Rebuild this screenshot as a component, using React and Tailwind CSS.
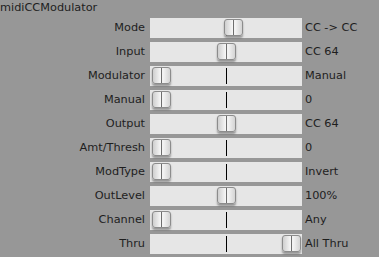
const rows = [
  { label: 'Mode', value: 'CC -> CC', pos: 74 },
  { label: 'Input', value: 'CC 64', pos: 67 },
  { label: 'Modulator', value: 'Manual', pos: 2 },
  { label: 'Manual', value: '0', pos: 2 },
  { label: 'Output', value: 'CC 64', pos: 67 },
  { label: 'Amt/Thresh', value: '0', pos: 2 },
  { label: 'ModType', value: 'Invert', pos: 2 },
  { label: 'OutLevel', value: '100%', pos: 67 },
  { label: 'Channel', value: 'Any', pos: 2 },
  { label: 'Thru', value: 'All Thru', pos: 132 },
]

const Thumb = ({ left }) => (
  <div
    className="absolute top-[1px] w-[19px] h-[17px] flex rounded-[3px] border border-[#8c8c8c] bg-gradient-to-r from-[#cfcfcf] via-[#fbfbfb] to-[#d4d4d4] shadow-[0_2px_2px_rgba(0,0,0,0.35)]"
    style={{ left }}
  >
    <div className="w-[8px]" />
    <div className="w-px bg-[#6e6e6e]" />
    <div className="w-px bg-[#f2f2f2]" />
  </div>
)

const SliderRow = ({ label, value, pos }) => (
  <div className="flex items-center h-5 text-[11.3px] text-[#1e1e1e]">
    <div className="w-[145px] text-right">{label}</div>
    <div className="relative ml-[5px] w-[152px] h-5 pl-px flex justify-center items-center bg-[#e6e6e6]">
      <div className="w-px h-4 bg-black" />
      <Thumb left={pos} />
    </div>
    <div className="ml-[3px]">{value}</div>
  </div>
)

export default function App() {
  return (
    <div
      className="w-[379px] h-[257px] bg-[#979797] overflow-hidden"
      style={{ fontFamily: '"DejaVu Sans", Verdana, sans-serif' }}
    >
      <div className="h-[18px] leading-[16px] text-[11.3px] text-[#1e1e1e]">midiCCModulator</div>
      <div className="flex flex-col gap-1">
        {rows.map((r) => (
          <SliderRow key={r.label} {...r} />
        ))}
      </div>
    </div>
  )
}
